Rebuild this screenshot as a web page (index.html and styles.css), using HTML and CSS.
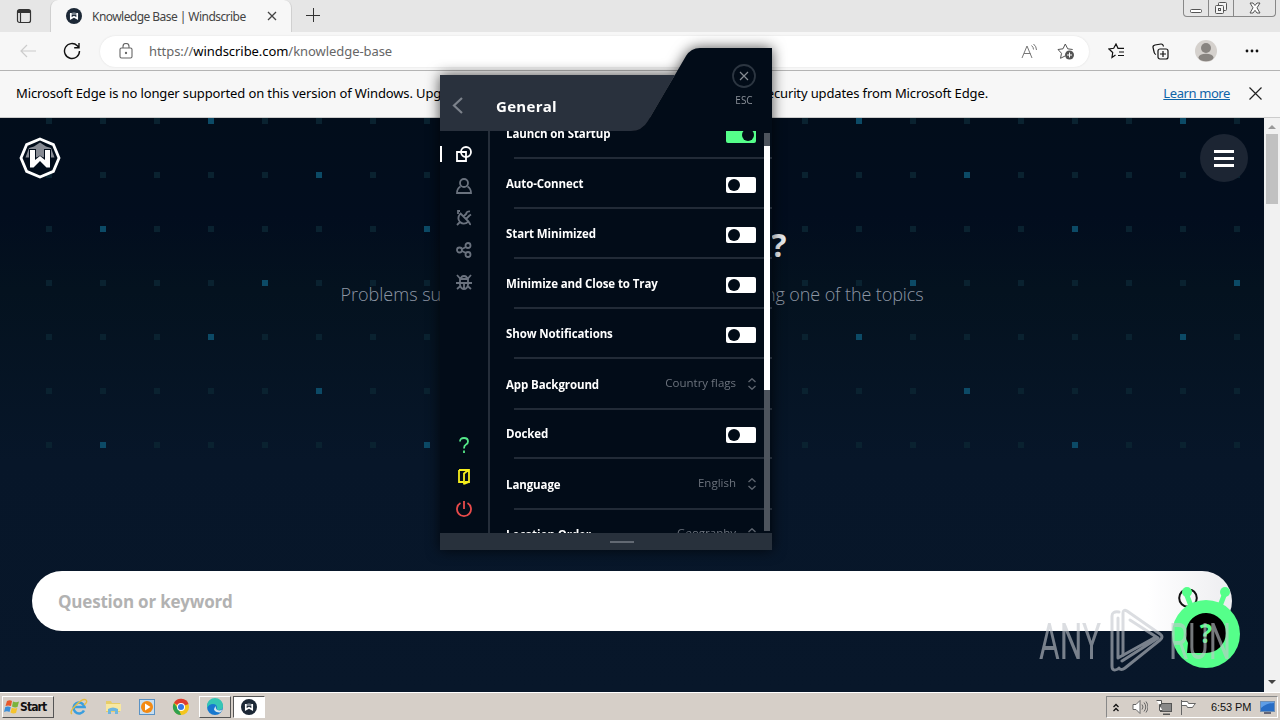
FILE: index.html
```html
<!DOCTYPE html>
<html lang="en">
<head>
    <meta charset="UTF-8">
    <meta name="viewport" content="width=device-width, initial-scale=1.0">
    <title>Knowledge Base | Windscribe</title>
    <link rel="stylesheet" href="styles.css">
</head>
<body>
    <svg class="defs" width="0" height="0">
        <symbol id="badge" viewBox="0 0 16 16">
            <circle cx="8" cy="8" r="8" fill="#1c2836"/>
            <path d="M3.5 7a5 5 0 0 1 9 0z" fill="#7c858f"/>
            <path d="M4.800 5v5.500L8 8.800l3.200 1.700V5" fill="none" stroke="#fff" stroke-width="1.7"/>
        </symbol>
    </svg>

    <div class="tabs">
        <svg class="tab-actions" width="16" height="16" viewBox="0 0 16 16" fill="none" stroke="#333" stroke-width="1.2">
            <rect x="1.5" y="1.5" width="13" height="13" rx="2"/>
            <path d="M2 3.5h12" stroke-width="3"/><path d="M4.5 5v9"/>
        </svg>
        <div class="tab">
            <svg width="16" height="16"><use href="#badge"/></svg>
            <span class="tab-title">Knowledge Base | Windscribe</span>
            <svg width="10" height="10" viewBox="0 0 10 10" stroke="#444" stroke-width="1.3"><path d="M1 1l8 8M9 1L1 9"/></svg>
        </div>
        <svg class="new-tab" width="14" height="14" viewBox="0 0 14 14" stroke="#333"><path d="M0 7.5h14M7.5 0v14"/></svg>
        <div class="win-buttons">
            <span><svg width="12" height="14" viewBox="0 0 12 14" fill="#fff" stroke="#555"><rect x=".5" y="8.500" width="11" height="3" rx="1"/></svg></span>
            <span><svg width="14" height="14" viewBox="0 0 14 14" fill="#f4f4f4" stroke="#555"><rect x="4.500" y="1.500" width="8" height="8" rx="1"/><rect x="1.500" y="4.500" width="8" height="8" rx="1"/><rect x="4.500" y="7.500" width="2" height="2"/></svg></span>
            <span class="wide"><svg width="12" height="12" viewBox="0 0 12 12" fill="#fff" stroke="#555"><path d="M1 1h3l2 2.500L8 1h3L8 5.800 11 11H8L6 8.300 4 11H1l3-5.200z"/></svg></span>
        </div>
    </div>

    <div class="toolbar">
        <svg class="back" width="16" height="14" viewBox="0 0 16 14" fill="none" stroke="#ccc" stroke-width="1.2"><path d="M16 7H1M7 1L1 7l6 6"/></svg>
        <svg class="reload" width="18" height="18" viewBox="0 0 18 18" fill="none" stroke="#111" stroke-width="1.4"><path d="M16.500 9a7.500 7.500 0 1 1-2.200-5.300L16 5.500M16 1v4.800h-4.800"/></svg>
        <div class="address">
            <svg class="lock" width="14" height="16" viewBox="0 0 14 16" fill="none" stroke="#666" stroke-width="1.1"><rect x="1" y="5" width="12" height="10" rx="1.500"/><path d="M4 5V3.500a3 3 0 0 1 6 0V5"/><circle cx="7" cy="10" r=".6" fill="#666"/></svg>
            <span class="url">https://<b>windscribe.com</b>/knowledge-base</span>
            <svg class="read" width="17" height="16" viewBox="0 0 17 16" fill="none" stroke="#777"><path d="M1 15L6 3l5 12M3 10.500h6.500M10.500 2.500q2 1.500 2 4M12.500 1q3 2.500 3 6"/></svg>
            <svg width="18" height="18" viewBox="0 0 18 18" fill="none" stroke="#555"><path d="M8 14l-4.500 2.300 1-5L1 7.500l5-.7L8.300 2l2.400 4.800 5 .7"/><circle cx="12.500" cy="13" r="4.500" fill="#555" stroke="none"/><path d="M12.500 10.500v5M10 13h5" stroke="#fff"/></svg>
        </div>
        <svg class="fav" width="17" height="16" viewBox="0 0 17 16" fill="none" stroke="#111" stroke-width="1.200"><path d="M7.500 12L4 14.500l.7-5L1 6l4.700-.700L8 1l2 4.300h6M11 9h5M10 12.500h6"/></svg>
        <svg class="collections" width="17" height="17" viewBox="0 0 17 17" fill="none" stroke="#111" stroke-width="1.200"><rect x="6" y="6" width="10" height="10" rx="2"/><path d="M11 8v6M8 11h6M4 11.500Q2.500 11 2.200 9.500L1 4.500q-.3-2 2-2.500l6-1q2-.1 2.500 2.500"/></svg>
        <svg class="profile" width="22" height="22" viewBox="0 0 22 22"><circle cx="11" cy="11" r="11" fill="#d5d1cd"/><circle cx="11" cy="8" r="5" fill="#888480"/><ellipse cx="11" cy="17.500" rx="7.500" ry="3.800" fill="#888480"/></svg>
        <svg class="more" width="14" height="4" viewBox="0 0 14 4" fill="#111"><circle cx="2" cy="2" r="1.400"/><circle cx="7" cy="2" r="1.400"/><circle cx="12" cy="2" r="1.400"/></svg>
    </div>

    <div class="infobar">
        <span class="notice-start">Microsoft Edge is no longer supported on this version of Windows. Upgrade to</span>
        <span class="notice-end">security updates from Microsoft Edge.</span>
        <a class="learn" href="#">Learn more</a>
        <svg width="13" height="13" viewBox="0 0 13 13" stroke="#222" stroke-width="1.200"><path d="M.5.500l12 12M12.500.500l-12 12"/></svg>
    </div>

    <div class="viewport">
        <main class="page">
            <svg class="dots" width="1264" height="330">
                <pattern id="grid" width="54" height="54" x="46" y="0" patternUnits="userSpaceOnUse">
                    <rect width="6" height="6" fill="#0a2230"/>
                </pattern>
                <pattern id="lit" width="324" height="216" x="100" y="0" patternUnits="userSpaceOnUse" fill="#0c4a66">
                    <rect x="108" y="0" width="6" height="6"/>
                    <rect x="216" y="54" width="6" height="6"/>
                    <rect x="0" y="108" width="6" height="6"/>
                    <rect x="162" y="162" width="6" height="6"/>
                </pattern>
                <rect x="46" width="1218" height="330" fill="url(#grid)"/>
                <rect x="46" width="1218" height="330" fill="url(#lit)"/>
            </svg>
            <header class="site-header">
                <svg width="42" height="42" viewBox="0 0 42 42">
                    <path d="M21 2l13.400 5.600L40 21l-5.600 13.400L21 40 7.600 34.400 2 21 7.600 7.600z" fill="#020d1b" stroke="#fff" stroke-width="2.800"/>
                    <path d="M6.500 20.500L10 11l5-1.500L21 5.500l6 4 5 1.500 3.500 9.500z" fill="#878b94"/>
                    <path d="M10 12h7v9l4-2.500 4 2.500v-9h7v19h-3.500L21 24.500 13.500 31H10z" fill="#020d1b"/>
                    <path d="M11 13h5v10l5-4 5 4V13h5v17.500h-3.500L21 24l-6.500 6.500H11z" fill="#fff"/>
                </svg>
                <button class="menu"><i></i><i></i><i></i></button>
            </header>
            <h1>?</h1>
            <p class="lead"><span>Problems su</span><span>ng one of the topics</span></p>
            <div class="search">Question or keyword
                <svg class="lens" width="24" height="24" viewBox="0 0 24 24" fill="none" stroke="#111" stroke-width="2"><circle cx="12" cy="9" r="8.800"/></svg>
            </div>
        </main>
        <div class="scrollbar">
            <svg width="8" height="4" viewBox="0 0 8 4" fill="#999"><path d="M4 0l4 4H0z"/></svg>
            <i class="thumb"></i>
            <svg class="down" width="8" height="4" viewBox="0 0 8 4" fill="#444"><path d="M0 0h8L4 4z"/></svg>
        </div>
    </div>

    <div class="taskbar">
        <div class="start">
            <svg width="16" height="16" viewBox="0 0 16 16"><path d="M3 2q3-1.500 5 0L7 7Q4 6 1.500 7z" fill="#e8582a"/><path d="M9 2.500q3 1.500 6 0L13.500 8Q11 9 8 7.500z" fill="#7bb33c"/><path d="M1.300 8Q4 7 6.800 8.200L5.500 13Q3 11.500 0 13z" fill="#3c8ed8"/><path d="M7.800 8.700q3 1.300 5.500.300L12 14q-3 1-5.500-.500z" fill="#f5c32c"/></svg>
            Start
        </div>
        <div class="quick">
            <svg width="18" height="18" viewBox="0 0 18 18" fill="none"><path d="M14 12.500A5.500 5.500 0 1 1 14.500 9H5" stroke="#3a9ede" stroke-width="2.600"/><path d="M2 16Q-1 14 6 7t10-5q2 2-2 5" stroke="#e5bd42" stroke-width="1.400"/></svg>
            <svg width="18" height="18" viewBox="0 0 18 18"><path d="M2 3h5l1 2h8v9H2z" fill="#e7cd68"/><path d="M2 6h15v7H2z" fill="#f8e8a0"/><path d="M4 16v-5q5-3 10 0v5h-3v-3H7v3z" fill="#6db6df"/></svg>
            <svg width="18" height="18" viewBox="0 0 18 18"><rect x="1.500" y="1.500" width="15" height="15" fill="#c7def0" stroke="#5a92c4"/><circle cx="9" cy="9" r="6" fill="#f38a13"/><path d="M7 5.500L12.500 9 7 12.500z" fill="#fff"/></svg>
            <svg width="18" height="18" viewBox="0 0 18 18"><circle cx="9" cy="9" r="8" fill="#f4c51d"/><path d="M9 9L2 5a8 8 0 0 1 14.500 1z" fill="#df3d31"/><path d="M2 5l5 7 2 5A8 8 0 0 1 2 5z" fill="#2ea04f"/><circle cx="9" cy="9" r="4" fill="#fff"/><circle cx="9" cy="9" r="3" fill="#3578e5"/></svg>
        </div>
        <div class="task">
            <svg width="18" height="18" viewBox="0 0 18 18"><circle cx="9" cy="9" r="8" fill="#1878cf"/><path d="M1 8a8 8 0 0 1 16 0q0 4-4 4-3 0-2-2 0-4-4-4-4 0-6 4z" fill="#35c6b4"/><path d="M10 8q-1 2 1 4 3 1 5-.5 0 2-2 3-5 0-6-3 0-2 2-3.500z" fill="#d8e9ee"/></svg>
        </div>
        <div class="task active"><svg width="16" height="16"><use href="#badge"/></svg></div>
        <div class="tray">
            <svg width="6" height="9" viewBox="0 0 6 9" fill="none" stroke="#111" stroke-width="1.300"><path d="M.5 4L3 1.500 5.500 4M.5 8L3 5.500 5.500 8"/></svg>
            <svg class="sound" width="16" height="14" viewBox="0 0 16 14" fill="#fff" stroke="#666"><path d="M1 4.500h3l4-4v13l-4-4H1z"/><path d="M10 4.500q2 2.500 0 5M12 2.500q3.500 4.500 0 9M14 1.500q4 5.500 0 11" fill="none"/></svg>
            <svg class="net" width="16" height="15" viewBox="0 0 16 15" stroke="#555"><rect x="4.500" y="3.500" width="11" height="8" fill="#888"/><path d="M7 14.500h7" stroke-width="2"/><path d="M.5.500h5v4h-2v6h3" fill="#fff"/></svg>
            <svg class="flag" width="16" height="15" viewBox="0 0 16 15" fill="#fff" stroke="#666"><path d="M1.500 0v15M1.500 1.500h6l1 2h7q-2 2-3 4h-5l-1-2h-5"/></svg>
            <span class="clock">6:53 PM</span>
            <svg width="15" height="13" viewBox="0 0 15 13"><rect x=".5" y=".5" width="14" height="10" fill="#286dc5" stroke="#6f8fb4"/><path d="M1 7Q7 2 14 2V1H1z" fill="#5f9ee6"/><path d="M4 12h7" stroke="#667" stroke-width="2"/></svg>
        </div>
    </div>

    <section class="app">
        <div class="app-header">
            <svg class="shape" width="332" height="83" viewBox="0 0 332 83">
                <path d="M332 0H260Q251 0 246 8L208 73Q202 83 191 83H332z" fill="#020c18"/>
                <path d="M0 27H235L208 73Q202 83 191 83H0z" fill="#29313d"/>
            </svg>
            <svg class="prev" width="11" height="17" viewBox="0 0 11 17" fill="none" stroke="#7c828b" stroke-width="2.200"><path d="M10 1L2 8.500l8 7.500"/></svg>
            <h2>General</h2>
            <div class="esc">
                <svg width="24" height="24" viewBox="0 0 24 24" fill="none"><circle cx="12" cy="12" r="11" stroke="#2c3641" stroke-width="1.800"/><path d="M8 8l8 8M16 8l-8 8" stroke="#858b92" stroke-width="1.200"/></svg>
                ESC
            </div>
        </div>
        <div class="app-body">
            <nav class="sections">
                <svg class="current" viewBox="0 0 16 16"><path d="M1 6h9v9H1z"/><circle cx="10" cy="6" r="5"/></svg>
                <svg viewBox="0 0 16 16"><circle cx="8" cy="5" r="4"/><path d="M4.500 8.500Q1 10.500 1 15h14q0-4.500-3.500-6.500"/></svg>
                <svg viewBox="0 0 16 16"><path d="M4.500 3.500L12.500 11.500Q8 15.500 4 12 0.500 8 4.500 3.500zM1 15l3-3M7.500 6.500L11 3M10 9l3.500-3.500M2 4V1h2M10 3q2-2 4-1.500M13.500 5.500l1.500-1M12 12q2.500 1 2 3"/></svg>
                <svg viewBox="0 0 16 16"><circle cx="3.500" cy="8" r="2.500"/><circle cx="12" cy="3.500" r="2.500"/><circle cx="12" cy="12.500" r="2.500"/><path d="M6 7l4-2M6 9l4 2"/></svg>
                <svg viewBox="0 0 16 16"><path d="M4 5h8v6q-1 4-4 4t-4-4zM5 5q0-3 3-3t3 3M8 9v6M0 9h16M1 1l3.500 4M15 1l-3.500 4M1 15l3.500-3M15 15l-3.500-3"/></svg>
                <svg class="help" viewBox="0 0 16 16"><path d="M4 4.500q0-3.500 4-3.500t4 3.500q0 2-2 3T8 11.500M8 13.500V16"/></svg>
                <svg class="logout" viewBox="0 0 16 16"><path d="M3 1h10v12H9M3 1v12h5M8 15.500V4.500L12.500 1M8 15l5-2"/></svg>
                <svg class="quit" viewBox="0 0 16 16"><path d="M4.500 2a7 7 0 1 0 7 0M8 0v8"/></svg>
            </nav>
            <div class="settings">
                <div class="row"><span>Launch on Startup</span><i class="toggle on"></i></div>
                <div class="row"><span>Auto-Connect</span><i class="toggle"></i></div>
                <div class="row"><span>Start Minimized</span><i class="toggle"></i></div>
                <div class="row"><span>Minimize and Close to Tray</span><i class="toggle"></i></div>
                <div class="row"><span>Show Notifications</span><i class="toggle"></i></div>
                <div class="row combo"><span>App Background</span><em>Country flags</em><svg viewBox="0 0 8 12"><path d="M.5 4L4 .8 7.500 4M.5 8L4 11.200 7.500 8"/></svg></div>
                <div class="row"><span>Docked</span><i class="toggle"></i></div>
                <div class="row combo"><span>Language</span><em>English</em><svg viewBox="0 0 8 12"><path d="M.5 4L4 .8 7.500 4M.5 8L4 11.200 7.500 8"/></svg></div>
                <div class="row combo"><span>Location Order</span><em>Geography</em><svg viewBox="0 0 8 12"><path d="M.5 4L4 .8 7.500 4M.5 8L4 11.200 7.500 8"/></svg></div>
            </div>
            <div class="app-scroll"><i></i></div>
        </div>
        <div class="app-footer"><i></i></div>
    </section>

    <svg class="chat" width="72" height="84" viewBox="0 0 72 84">
        <path d="M23 22L18 9M52 22l5-13" stroke="#55ff8a" stroke-width="5"/>
        <circle cx="19" cy="8" r="5" fill="#55ff8a"/><circle cx="57" cy="8" r="5" fill="#55ff8a"/>
        <circle cx="38" cy="50" r="34" fill="#55ff8a"/>
        <path d="M19 69l1-10Q17 54 18 48a20 20 0 1 1 20 21z" fill="#000"/>
        <text x="38" y="59" text-anchor="middle" class="chat-mark">?</text>
    </svg>

    <svg class="watermark" width="200" height="68" viewBox="0 0 200 68">
        <text x="1" y="53" textLength="62" lengthAdjust="spacingAndGlyphs">ANY</text>
        <text x="131" y="53" textLength="62" lengthAdjust="spacingAndGlyphs">RUN</text>
        <g fill="none" stroke-width="3" stroke-linejoin="round" stroke-linecap="round">
            <path d="M85 49V7q0-4 4-2l33 23q4 3 0 6L87 62q-4 3-6 0"/>
            <path d="M81 6q-7-1-7 4v50q0 6 6 3M80 12v40l36-20M92 14l28 18-36 23"/>
        </g>
    </svg>
</body>
</html>
```

FILE: styles.css
```css
* {
    box-sizing: border-box;
}
body {
    margin: 0;
    width: 1280px;
    height: 720px;
    overflow: hidden;
    display: flex;
    flex-direction: column;
    font-family: "Noto Sans", sans-serif;
    font-size: 12px;
    color: #111;
    background: #f7f7f7;
}
svg {
    flex: none;
}
.defs {
    position: absolute;
}

/* browser chrome */
.tabs {
    height: 32px;
    flex: none;
    display: flex;
    background: #e6e6e6;
}
.tab-actions {
    margin: 8px 18px 0 16px;
}
.tab {
    width: 242px;
    display: flex;
    align-items: center;
    padding: 0 14px 0 15px;
    background: #f7f7f7;
    border: 1px solid #d0d0d0;
    border-width: 0 1px;
    border-radius: 8px 8px 0 0;
}
.tab-title {
    flex: 1;
    margin-left: 10px;
    font-size: 12px;
    letter-spacing: -0.55px;
    white-space: nowrap;
    color: #444;
}
.new-tab {
    margin: 8px 0 0 14px;
}
.win-buttons {
    display: flex;
    height: 17px;
    margin-left: auto;
    margin-right: 4px;
    border: 1px solid #888;
    border-top: 0;
    border-radius: 0 0 4px 4px;
}
.win-buttons span {
    width: 25px;
    display: flex;
    justify-content: center;
    align-items: center;
    border-right: 1px solid #888;
}
.win-buttons .wide {
    width: 41px;
    border: 0;
}
.toolbar {
    height: 39px;
    flex: none;
    display: flex;
    align-items: center;
    border-bottom: 1px solid #b4b4b4;
}
.back {
    margin-left: 20px;
}
.reload {
    margin-left: 27px;
}
.address {
    width: 989px;
    height: 31px;
    margin-left: 19px;
    padding: 0 14px 0 19px;
    display: flex;
    align-items: center;
    border-radius: 16px;
    background: #fff;
    box-shadow: 0 0 2px #ddd;
}
.url {
    margin-left: 16px;
    flex: 1;
    font-size: 13px;
    letter-spacing: -0.06px;
    color: #666;
}
.url b {
    font-weight: normal;
    color: #000;
}
.read {
    margin-right: 19px;
}
.fav {
    margin-left: 19px;
}
.collections {
    margin-left: 27px;
}
.profile {
    margin-left: 26px;
}
.more {
    margin-left: 28px;
}
.infobar {
    height: 47px;
    flex: none;
    display: flex;
    align-items: center;
    padding: 0 18px 2px 16px;
    border-bottom: 1px solid #ccc;
    font-size: 13px;
    white-space: nowrap;
    color: #000;
}
.notice-start {
    width: 500px;
    letter-spacing: -0.13px;
}
.notice-end {
    width: 472px;
    text-align: right;
    letter-spacing: -0.13px;
}
.learn {
    margin-left: auto;
    margin-right: 19px;
    letter-spacing: -0.4px;
    color: #0f64a8;
}

/* knowledge base page */
.viewport {
    flex: 1;
    display: flex;
    min-height: 0;
}
.page {
    position: relative;
    width: 1264px;
    background: linear-gradient(#020d1b, #020d1e 17%, #04121f 30%, #071629 60%, #08172a);
}
.dots {
    position: absolute;
    left: 0;
    top: 0;
}
.site-header {
    position: relative;
    height: 80px;
    display: flex;
    align-items: center;
    justify-content: space-between;
    padding: 0 16px 0 19px;
}
.menu {
    width: 48px;
    height: 48px;
    display: flex;
    flex-direction: column;
    align-items: center;
    justify-content: center;
    gap: 4px;
    border: 0;
    border-radius: 50%;
    background: #1c2533;
}
.menu i {
    width: 20px;
    height: 3px;
    background: #fff;
}
.page h1 {
    position: relative;
    width: 309px;
    height: 42px;
    margin: 24px auto 0;
    font: bold 32px/46px "Open Sans", sans-serif;
    text-align: right;
    color: #e8ebef;
}
.lead {
    position: relative;
    width: 583px;
    margin: 17px auto 0;
    display: flex;
    justify-content: space-between;
    font: 300 18px/26px "Open Sans", sans-serif;
    color: #8e97a5;
}
.lead span + span {
    letter-spacing: -0.1px;
}
.search {
    position: relative;
    width: 1200px;
    height: 60px;
    margin: 264px 32px 0;
    padding: 0 32px 0 26px;
    display: flex;
    align-items: center;
    justify-content: space-between;
    border-radius: 30px;
    background: linear-gradient(90deg, #fff 93%, #ededf0);
    font: bold 17px "Open Sans", sans-serif;
    letter-spacing: -0.2px;
    color: #b2b2b2;
}
.scrollbar {
    width: 16px;
    padding: 7px 0 8px;
    display: flex;
    flex-direction: column;
    align-items: center;
    background: #f1f1f1;
}
.thumb {
    width: 12px;
    height: 70px;
    margin-top: 5px;
    background: #c1c1c1;
}
.down {
    margin-top: auto;
}

/* taskbar */
.taskbar {
    height: 28px;
    flex: none;
    display: flex;
    align-items: center;
    padding: 1px 2px 0;
    border-top: 1px solid #fff;
    background: #d6cfc8;
}
.start, .task {
    height: 22px;
    display: flex;
    align-items: center;
    border: 1px solid #fff;
    border-right-color: #555;
    border-bottom-color: #555;
}
.start {
    width: 52px;
    padding-left: 1px;
    font: bold 12px "DejaVu Sans Condensed", "DejaVu Sans", sans-serif;
    letter-spacing: -0.9px;
}
.quick {
    width: 145px;
    display: flex;
    gap: 16px;
    padding-left: 16px;
}
.task {
    width: 32px;
    justify-content: center;
    margin-right: 2px;
}
.task.active {
    background: #fff;
    border-color: #555 #fff #fff #555;
}
.tray {
    width: 172px;
    height: 22px;
    margin-left: auto;
    padding: 0 2px 0 6px;
    display: flex;
    align-items: center;
    border: 1px solid #888;
    border-right-color: #fff;
    border-bottom-color: #fff;
}
.sound {
    margin-left: 13px;
}
.net {
    margin-left: 8px;
}
.flag {
    margin-left: 8px;
}
.clock {
    width: 40px;
    margin: 0 auto 0 15px;
    font: 11px "Liberation Sans", sans-serif;
    letter-spacing: -0.1px;
    white-space: nowrap;
}

/* preferences window */
.app {
    position: absolute;
    left: 440px;
    top: 48px;
    width: 332px;
    height: 502px;
    display: flex;
    flex-direction: column;
    font-family: "Open Sans", sans-serif;
    filter: drop-shadow(0 0 7px rgba(0, 0, 0, 0.7));
}
.app-header {
    position: relative;
    height: 83px;
    flex: none;
    display: flex;
    padding-left: 12px;
}
.shape {
    position: absolute;
    left: 0;
    top: 0;
}
.prev {
    position: relative;
    margin-top: 49px;
}
.app h2 {
    position: relative;
    margin: 47px 0 0 33px;
    font: bold 15px/22px "Open Sans", sans-serif;
    letter-spacing: 0.3px;
    color: #fff;
}
.esc {
    position: relative;
    width: 24px;
    margin: 16px 16px 0 auto;
    display: flex;
    flex-direction: column;
    align-items: center;
    gap: 6px;
    font-size: 10px;
    line-height: 13px;
    color: #8a9098;
}
.app-body {
    position: relative;
    height: 402px;
    display: flex;
    background: #020c18;
    overflow: hidden;
}
.sections {
    width: 50px;
    display: flex;
    flex-direction: column;
    align-items: center;
    gap: 16px;
    padding: 15px 0 16px;
    border-right: 2px solid #252e3a;
}
.sections svg {
    width: 16px;
    height: 16px;
    fill: none;
    stroke: #6a727e;
    stroke-width: 1.8;
}
.sections .current {
    width: 48px;
    stroke: #fff;
    border-left: 2px solid #fff;
    padding-right: 2px;
}
.sections .help {
    margin-top: auto;
    stroke: #55e889;
}
.sections .logout {
    stroke: #f5ee1c;
}
.sections .quit {
    stroke: #e94b4b;
}
.settings {
    flex: 1;
    margin-top: -22px;
}
.row {
    height: 50px;
    display: flex;
    align-items: center;
    justify-content: space-between;
    padding: 0 16px;
    background: linear-gradient(#222b37, #222b37) 24px 100% / 100% 2px no-repeat;
    color: #fff;
    font-size: 11.5px;
    font-weight: bold;
    letter-spacing: -0.1px;
}
.row span {
    margin-top: -1px;
}
.row.combo {
    height: 51px;
    margin-bottom: -1px;
}
.toggle {
    width: 30px;
    height: 16px;
    padding: 2px;
    margin-top: 2px;
    border-radius: 2px;
    background: #fff;
}
.toggle::before {
    content: "";
    display: block;
    width: 12px;
    height: 12px;
    border-radius: 50%;
    background: #020c18;
}
.toggle.on {
    background: #55ff8a;
}
.toggle.on::before {
    margin-left: 14px;
}
.row em {
    margin: -5px 12px 0 auto;
    font-style: normal;
    font-weight: normal;
    font-size: 11.5px;
    letter-spacing: 0;
    color: #6c737d;
}
.row svg {
    width: 8px;
    height: 12px;
    margin-top: -1px;
    fill: none;
    stroke: #5d646e;
    stroke-width: 1.4;
}
.app-scroll {
    position: absolute;
    right: 2px;
    top: 2px;
    width: 6px;
    height: 398px;
    padding-top: 13px;
    background: #4d545d;
}
.app-scroll i {
    display: block;
    height: 244px;
    background: #fff;
}
.app-footer {
    height: 17px;
    flex: none;
    display: flex;
    justify-content: center;
    align-items: center;
    padding-left: 32px;
    background: #28313c;
}
.app-footer i {
    width: 24px;
    height: 2px;
    background: #626973;
}

/* floating items */
.chat {
    position: absolute;
    left: 1168px;
    top: 584px;
}
.chat-mark {
    font: bold 26px "Open Sans", sans-serif;
    fill: #55ff8a;
}
.watermark {
    position: absolute;
    left: 1038px;
    top: 606px;
    opacity: 0.6;
}
.watermark text {
    font: 400 50px Roboto, sans-serif;
    fill: #c4c8ce;
}
.watermark g {
    stroke: #c4c8ce;
}
```
